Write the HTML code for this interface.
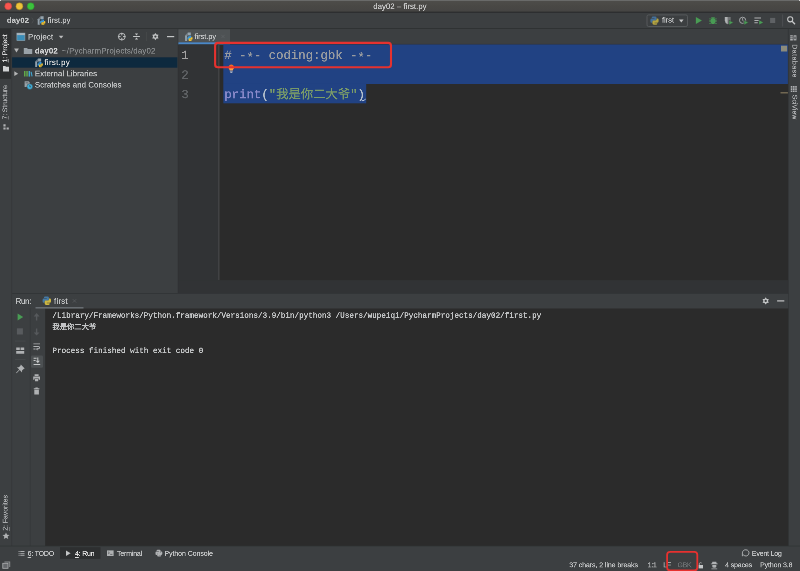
<!DOCTYPE html>
<html lang="zh">
<head>
<meta charset="utf-8">
<title>day02 – first.py</title>
<style>
html,body{margin:0;padding:0;background:#3c3f41;}
body{width:800px;height:571px;overflow:hidden;position:relative;}
#root{position:absolute;left:0;top:0;width:800px;height:571px;overflow:hidden;}
#bg,#icons{position:absolute;left:0;top:0;}
#texts{will-change:transform;position:absolute;left:0;top:0;width:3200px;height:2284px;transform:scale(.25);transform-origin:0 0;font-family:"Liberation Sans","Noto Sans CJK SC",sans-serif;color:#bbbbbb;}
.t{position:absolute;white-space:nowrap;line-height:40px;height:40px;-webkit-text-stroke:0.9px currentColor;}
.m{font-family:"Liberation Mono","Noto Sans CJK SC",monospace;}
.c{-webkit-text-stroke:1.3px currentColor;}
u{text-decoration-thickness:2.6px;text-underline-offset:5px;}
.st{position:relative;top:9px;}
</style>
</head>
<body>
<div id="root">

<svg id="bg" width="800" height="571" viewBox="0 0 800 571">
<defs>
<linearGradient id="tb" x1="0" y1="0" x2="0" y2="1"><stop offset="0" stop-color="#4e4d4a"/><stop offset="0.5" stop-color="#494845"/><stop offset="1" stop-color="#454443"/></linearGradient>
</defs>
<rect x="0" y="0" width="800" height="571" fill="#3c3f41"/>
<!-- title bar -->
<rect x="0" y="0" width="800" height="12" fill="url(#tb)"/>
<rect x="0" y="0" width="800" height="0.9" fill="#6c6e6e"/>
<rect x="0" y="0" width="1" height="1" fill="#d8d8d8"/><rect x="799" y="0" width="1" height="1" fill="#d8d8d8"/>
<rect x="0" y="11.7" width="800" height="1" fill="#27292a"/>
<circle cx="8.2" cy="6.3" r="3.45" fill="#f9564f" stroke="#c4433d" stroke-width="0.5"/>
<circle cx="19.4" cy="6.3" r="3.45" fill="#ecc23a" stroke="#a9841f" stroke-width="0.5"/>
<circle cx="30.7" cy="6.3" r="3.45" fill="#3cc23d" stroke="#2c942d" stroke-width="0.5"/>
<!-- nav bar -->
<rect x="0" y="28.1" width="800" height="0.9" fill="#2e3133"/>
<rect x="647" y="14.9" width="40.5" height="11.6" rx="1.6" fill="none" stroke="#595c5f" stroke-width="0.9"/>
<rect x="782.3" y="14.5" width="0.8" height="12" fill="#505356"/>
<!-- left tool strip -->
<rect x="0" y="29" width="11.4" height="49.8" fill="#2d2f30"/>
<rect x="11.3" y="29" width="0.8" height="517" fill="#35383a"/>
<!-- project panel -->
<rect x="12.1" y="57.3" width="165.5" height="10.4" fill="#0d293e"/>
<rect x="146.3" y="32" width="0.7" height="9" fill="#484b4d"/>
<!-- editor -->
<rect x="177.5" y="29" width="0.9" height="264.4" fill="#35383a"/>
<rect x="178.4" y="29.4" width="51.6" height="13" fill="#4e5254"/>
<rect x="178.4" y="42.3" width="51.6" height="2.3" fill="#4a88c7"/>
<rect x="230" y="43.8" width="558.4" height="0.9" fill="#37393b"/>
<rect x="178.4" y="44.6" width="610" height="248.6" fill="#2b2b2b"/>
<rect x="178.4" y="44.6" width="40.2" height="248.6" fill="#313335"/>
<rect x="218.5" y="44.6" width="0.8" height="235.6" fill="#555758"/>
<rect x="178.4" y="280.1" width="610" height="13" fill="#313335"/>
<rect x="223.3" y="44.5" width="565.2" height="39.5" fill="#214283"/>
<rect x="223.3" y="83.9" width="142.9" height="19.4" fill="#214283"/>
<rect x="781" y="45.7" width="6.2" height="5.8" fill="#8c8b7c"/>
<rect x="780.5" y="92.4" width="7.5" height="0.9" fill="#a08f6c"/>
<!-- right tool strip -->
<rect x="788.4" y="29" width="11.6" height="517" fill="#3c3f41"/>
<rect x="787.9" y="29" width="0.8" height="517" fill="#323537"/>
<!-- run panel -->
<rect x="12.1" y="293" width="776" height="0.9" fill="#323537"/>
<rect x="12.1" y="293.9" width="776" height="14.6" fill="#3c3f41"/>
<rect x="29.8" y="308.5" width="0.8" height="237.5" fill="#35383a"/>
<rect x="45.2" y="308.5" width="743" height="237.5" fill="#2b2b2b"/>
<rect x="35.5" y="307.1" width="48" height="1.4" fill="#6c7277"/>
<rect x="31" y="355.4" width="12" height="12.4" rx="1.3" fill="#4c5052"/>
<rect x="15" y="340.7" width="10.5" height="0.7" fill="#4a4d4f"/>
<rect x="15" y="359" width="10.5" height="0.7" fill="#4a4d4f"/>
<!-- bottom tool bar -->
<rect x="0" y="545.7" width="800" height="0.9" fill="#2f3234"/>
<rect x="0" y="546.6" width="800" height="24.4" fill="#3c3f41"/>
<rect x="60" y="547.2" width="40.5" height="11.6" fill="#2d2f30"/>
</svg>

<div id="texts">
<div class="t" id="title" style="left:1493.2px;top:6px;font-size:31.20px;color:#c6c6c6;letter-spacing:0.10px;">day02 – first.py</div>
<div class="t" id="nav1" style="left:27.6px;top:60px;font-size:30.40px;color:#c0c2c3;font-weight:bold;letter-spacing:0.48px;">day02</div>
<div class="t" id="nav2" style="left:190.0px;top:60px;font-size:30.40px;color:#c0c2c3;letter-spacing:0.30px;">first.py</div>
<div class="t" id="rc" style="left:2648.0px;top:59px;font-size:30.40px;color:#c0c2c3;letter-spacing:-0.20px;">first</div>
<div class="t" id="ph" style="left:112.0px;top:128px;font-size:31.20px;color:#c0c2c3;letter-spacing:0.54px;">Project</div>
<div class="t" id="r1" style="left:139.6px;top:184px;font-size:31.20px;color:#cfd0d1;font-weight:bold;letter-spacing:0.72px;">day02</div>
<div class="t" id="r1b" style="left:248.0px;top:184px;font-size:31.20px;color:#85888a;letter-spacing:0.78px;">~/PycharmProjects/day02</div>
<div class="t" id="r2" style="left:177.6px;top:230px;font-size:31.20px;color:#cfd0d1;letter-spacing:1.35px;">first.py</div>
<div class="t" id="r3" style="left:139.6px;top:275px;font-size:31.20px;color:#c0c2c3;letter-spacing:0.34px;">External Libraries</div>
<div class="t" id="r4" style="left:139.6px;top:320px;font-size:31.20px;color:#c0c2c3;letter-spacing:0.40px;">Scratches and Consoles</div>
<div class="t" id="tabt" style="left:778.0px;top:126px;font-size:29.60px;color:#c0c2c3;letter-spacing:-0.12px;">first.py</div>
<div class="t m" id="ln1" style="left:725.2px;top:203px;font-size:49.32px;color:#a4a3a3;">1</div>
<div class="t m" id="ln2" style="left:725.2px;top:282px;font-size:49.32px;color:#606366;">2</div>
<div class="t m" id="ln3" style="left:725.2px;top:360px;font-size:49.32px;color:#606366;">3</div>
<div class="t m" id="c1" style="left:897.2px;top:203px;font-size:49.32px;color:#9b9da0;"># -<span class="st">*</span>- coding:gbk -<span class="st">*</span>-</div>
<div class="t m" id="c3" style="left:897.2px;top:360px;font-size:49.32px;color:#b4c0cc;letter-spacing:0.03px;"><span style="color:#8b8bcb">print</span>(<span style="color:#7b9c68">"我是你二大爷"</span>)</div>
<div class="t" id="runl" style="left:62.8px;top:1185px;font-size:31.20px;color:#c0c2c3;letter-spacing:-1.20px;">Run:</div>
<div class="t" id="runt" style="left:216.0px;top:1185px;font-size:31.20px;color:#c0c2c3;letter-spacing:0.96px;">first</div>
<div class="t m c" id="o1" style="left:209.6px;top:1243px;font-size:30.48px;color:#c3c5c6;letter-spacing:-0.01px;">/Library/Frameworks/Python.framework/Versions/3.9/bin/python3 /Users/wupeiqi/PycharmProjects/day02/first.py</div>
<div class="t m c" id="o2" style="left:209.6px;top:1290px;font-size:29.20px;color:#c3c5c6;letter-spacing:0.03px;">我是你二大爷</div>
<div class="t m c" id="o4" style="left:209.6px;top:1384px;font-size:30.48px;color:#c3c5c6;">Process finished with exit code 0</div>
<div class="t" id="b1" style="left:110.4px;top:2194px;font-size:28.00px;color:#c0c2c3;letter-spacing:-0.77px;"><u>6</u>: TODO</div>
<div class="t" id="b2" style="left:300.0px;top:2194px;font-size:28.00px;color:#dfdfdf;letter-spacing:-0.83px;"><u>4</u>: Run</div>
<div class="t" id="b3" style="left:468.0px;top:2194px;font-size:28.00px;color:#c0c2c3;letter-spacing:-0.75px;">Terminal</div>
<div class="t" id="b4" style="left:657.6px;top:2194px;font-size:28.00px;color:#c0c2c3;letter-spacing:-0.26px;">Python Console</div>
<div class="t" id="b5" style="left:3007.6px;top:2194px;font-size:28.00px;color:#c0c2c3;letter-spacing:-0.80px;">Event Log</div>
<div class="t" id="s1" style="left:2277.2px;top:2240px;font-size:27.60px;color:#c0c2c3;letter-spacing:-0.14px;">37 chars, 2 line breaks</div>
<div class="t" id="s2" style="left:2591.2px;top:2240px;font-size:27.60px;color:#c0c2c3;letter-spacing:-1.20px;">1:1</div>
<div class="t" id="s3" style="left:2652.8px;top:2240px;font-size:27.60px;color:#c0c2c3;letter-spacing:-1.20px;">LF</div>
<div class="t" id="s4" style="left:2710.0px;top:2240px;font-size:27.60px;color:#6c6f71;letter-spacing:-1.07px;">GBK</div>
<div class="t" id="s5" style="left:2900.4px;top:2240px;font-size:27.60px;color:#c0c2c3;letter-spacing:-0.35px;">4 spaces</div>
<div class="t" id="s6" style="left:3040.4px;top:2240px;font-size:27.60px;color:#c0c2c3;letter-spacing:-0.24px;">Python 3.8</div>
<div class="t" id="l1" style="left:0.4px;top:250.4px;font-size:27.60px;color:#d6d6d6;transform-origin:0 0;transform:rotate(-90deg);letter-spacing:-0.50px;"><u>1</u>: Project</div>
<div class="t" id="l2" style="left:0.4px;top:477.6px;font-size:27.60px;color:#a9abad;transform-origin:0 0;transform:rotate(-90deg);letter-spacing:-0.45px;"><u>7</u>: Structure</div>
<div class="t" id="l3" style="left:0.8px;top:2122.8px;font-size:27.60px;color:#a9abad;transform-origin:0 0;transform:rotate(-90deg);letter-spacing:-0.13px;"><u>2</u>: Favorites</div>
<div class="t" id="r1t" style="left:3198.8px;top:177.2px;font-size:27.60px;color:#a9abad;transform-origin:0 0;transform:rotate(90deg);letter-spacing:2.10px;">Database</div>
<div class="t" id="r2t" style="left:3198.8px;top:378.8px;font-size:27.60px;color:#a9abad;transform-origin:0 0;transform:rotate(90deg);letter-spacing:0.11px;">SciView</div>
</div>

<svg id="icons" width="800" height="571" viewBox="0 0 800 571">
<path d="M31.8,17.6 l1.6,2.9 l-1.6,2.9" stroke="#505355" stroke-width="0.7" fill="none"/>
<g transform="translate(37.6,16.2) scale(1.0,1.0)"><path d="M0.1,3 L3,0.1 H6 V8.6 H0.1 Z" fill="#95a3ad"/><path d="M0.1,3 L3,0.1 V3 Z" fill="#3c3f41" opacity="0.45"/><rect x="2" y="2.9" width="6" height="6.2" rx="1.4" fill="#3c3f41"/><g transform="translate(5.1,6) scale(0.66)"><path d="M-1.5,-4 H0.7 Q2,-4 2,-2.7 V-1 Q2,0.1 0.9,0.1 H-1 Q-2.1,0.1 -2.1,1.2 V2 H-2.9 Q-4,2 -4,0.8 V-0.7 Q-4,-2 -2.8,-2 H0 V-2.5 H-2.7 V-2.8 Q-2.7,-4 -1.5,-4 Z" fill="#3d9bdc"/><path d="M-1.5,-4 H0.7 Q2,-4 2,-2.7 V-1 Q2,0.1 0.9,0.1 H-1 Q-2.1,0.1 -2.1,1.2 V2 H-2.9 Q-4,2 -4,0.8 V-0.7 Q-4,-2 -2.8,-2 H0 V-2.5 H-2.7 V-2.8 Q-2.7,-4 -1.5,-4 Z" fill="#f1c232" transform="rotate(180)"/></g></g>
<g transform="translate(654.5,20.6) scale(1.025)" opacity="1.0"><path d="M-1.5,-4 H0.7 Q2,-4 2,-2.7 V-1 Q2,0.1 0.9,0.1 H-1 Q-2.1,0.1 -2.1,1.2 V2 H-2.9 Q-4,2 -4,0.8 V-0.7 Q-4,-2 -2.8,-2 H0 V-2.5 H-2.7 V-2.8 Q-2.7,-4 -1.5,-4 Z" fill="#44709a"/><path d="M-1.5,-4 H0.7 Q2,-4 2,-2.7 V-1 Q2,0.1 0.9,0.1 H-1 Q-2.1,0.1 -2.1,1.2 V2 H-2.9 Q-4,2 -4,0.8 V-0.7 Q-4,-2 -2.8,-2 H0 V-2.5 H-2.7 V-2.8 Q-2.7,-4 -1.5,-4 Z" fill="#b5a540" transform="rotate(180)"/></g>
<path d="M679,19.5 h4.6 l-2.3,2.9 z" fill="#c3c4c5"/>
<path d="M695.9,17 l6,3.5 l-6,3.5 z" fill="#499c54"/>
<g fill="#499c54"><ellipse cx="713" cy="21" rx="2.5" ry="3.1"/><path d="M711.2,17.3 h3.6 v1 h-3.6 z"/><path d="M709.3,18.4 h1.5 v0.9 h-1.5 z M715.2,18.4 h1.5 v0.9 h-1.5 z M709.1,20.6 h7.8 v0.9 h-7.8 z M709.3,22.9 h1.5 v0.9 h-1.5 z M715.2,22.9 h1.5 v0.9 h-1.5 z"/></g>
<path d="M724.8,17 h5.6 v3.6 q0,2.4 -2.8,3.6 q-2.8,-1.2 -2.8,-3.6 z" fill="#afb1b3"/><path d="M727.6,17 h2.8 v3.6 q0,2.4 -2.8,3.6 z" fill="#3c3f41" opacity="0.55"/><path d="M729,20.1 l4.5,2.5 l-4.5,2.5 z" fill="#499c54" stroke="#3c3f41" stroke-width="0.6"/>
<circle cx="742.6" cy="20.3" r="3.1" fill="none" stroke="#afb1b3" stroke-width="0.9"/><path d="M742.6,18 v2.4 l1.4,1" stroke="#afb1b3" stroke-width="0.8" fill="none"/><path d="M744,20.1 l4.5,2.5 l-4.5,2.5 z" fill="#499c54" stroke="#3c3f41" stroke-width="0.6"/>
<path d="M754.4,17.5 h6.6 v1 h-6.6 z M754.4,19.9 h4.2 v1 h-4.2 z M754.4,22.3 h3.4 v1 h-3.4 z" fill="#afb1b3"/><path d="M759.2,20.3 l3.9,2.1 l-3.9,2.1 z" fill="#499c54"/>
<rect x="770.1" y="17.9" width="5.1" height="5.1" fill="#5f6265"/>
<circle cx="790.2" cy="19.3" r="2.55" fill="none" stroke="#c9cacb" stroke-width="1.05"/><path d="M792.1,21.3 l2.9,3" stroke="#c9cacb" stroke-width="1.3"/>
<path d="M3,66 h2.3 l0.7,0.8 h3 v4.6 h-6 z" fill="#d0d1d2"/>
<path d="M3.4,124.2 h2.2 v2.2 h-2.2 z M3.4,127.4 h2.2 v2.2 h-2.2 z M6.6,127.4 h2.2 v2.2 h-2.2 z" fill="#afb1b3"/>
<path d="M6,532.4 l1.05,2.3 l2.5,0.25 l-1.9,1.65 l0.55,2.45 l-2.2,-1.3 l-2.2,1.3 l0.55,-2.45 l-1.9,-1.65 l2.5,-0.25 z" fill="#afb1b3"/>
<rect x="16.9" y="33.1" width="8" height="7.6" fill="#3a8db8" stroke="#93a3ad" stroke-width="0.6"/><rect x="16.9" y="33.1" width="8" height="2" fill="#a9b4bc"/>
<path d="M58.8,35.8 h4.6 l-2.3,2.7 z" fill="#bcbdbe"/>
<circle cx="121.8" cy="36.6" r="3.4" fill="none" stroke="#c3c5c6" stroke-width="0.9"/><path d="M121.8,33 v2.4 M121.8,37.8 v2.4 M118.2,36.6 h2.4 M123,36.6 h2.4" stroke="#c3c5c6" stroke-width="1"/>
<path d="M133.1,36.1 h6.8 v0.9 h-6.8 z M134.9,33.6 h3.2 l-1.6,1.9 z M134.9,39.5 h3.2 l-1.6,-1.9 z" fill="#c3c5c6"/>
<path d="M155.40,33.00 L156.55,34.61 L158.52,34.80 L157.70,36.60 L158.52,38.40 L156.55,38.59 L155.40,40.20 L154.25,38.59 L152.28,38.40 L153.10,36.60 L152.28,34.80 L154.25,34.61 z" fill="#c3c5c6"/><circle cx="155.4" cy="36.6" r="1.15" fill="#3c3f41"/>
<rect x="167" y="36" width="7.2" height="1.2" fill="#c3c5c6"/>
<path d="M14.1,48.6 h4.8 l-2.4,3.8 z" fill="#b4b5b6"/>
<path d="M23.8,47.9 h3.2 l0.9,1.1 h4.3 v4.9 h-8.4 z" fill="#9aa2a8"/>
<g transform="translate(35.1,58.5) scale(1.0,1.0)"><path d="M0.1,3 L3,0.1 H6 V8.6 H0.1 Z" fill="#95a3ad"/><path d="M0.1,3 L3,0.1 V3 Z" fill="#0d293e" opacity="0.45"/><rect x="2" y="2.9" width="6" height="6.2" rx="1.4" fill="#0d293e"/><g transform="translate(5.1,6) scale(0.66)"><path d="M-1.5,-4 H0.7 Q2,-4 2,-2.7 V-1 Q2,0.1 0.9,0.1 H-1 Q-2.1,0.1 -2.1,1.2 V2 H-2.9 Q-4,2 -4,0.8 V-0.7 Q-4,-2 -2.8,-2 H0 V-2.5 H-2.7 V-2.8 Q-2.7,-4 -1.5,-4 Z" fill="#3d9bdc"/><path d="M-1.5,-4 H0.7 Q2,-4 2,-2.7 V-1 Q2,0.1 0.9,0.1 H-1 Q-2.1,0.1 -2.1,1.2 V2 H-2.9 Q-4,2 -4,0.8 V-0.7 Q-4,-2 -2.8,-2 H0 V-2.5 H-2.7 V-2.8 Q-2.7,-4 -1.5,-4 Z" fill="#f1c232" transform="rotate(180)"/></g></g>
<path d="M14.3,71.3 l3.9,2.4 l-3.9,2.4 z" fill="#b4b5b6"/>
<path d="M24,71 h1.5 v5.6 h-1.5 z M26.3,71 h1.5 v5.6 h-1.5 z" fill="#62a84a"/><path d="M28.6,71 h1.5 v5.6 h-1.5 z" fill="#43a5cf"/><path d="M30.6,72 l1.1,-0.3 l0.9,4.6 l-1.1,0.3 z" fill="#43a5cf"/>
<path d="M24.6,81.2 h4 l1.2,1.2 v4.6 h-5.2 z" fill="#9aa2a8"/><path d="M25.6,82.6 h2.6 v0.6 h-2.6 z" fill="#3c3f41"/><circle cx="29.8" cy="86.6" r="2.9" fill="#3fb1dc" stroke="#3c3f41" stroke-width="0.5"/><path d="M29.8,85 v1.8 h1.3" stroke="#3c3f41" stroke-width="0.7" fill="none"/>
<g transform="translate(185,32.4) scale(0.9736842105263159,1.0)"><path d="M0.1,3 L3,0.1 H6 V8.6 H0.1 Z" fill="#95a3ad"/><path d="M0.1,3 L3,0.1 V3 Z" fill="#4e5254" opacity="0.45"/><rect x="2" y="2.9" width="6" height="6.2" rx="1.4" fill="#4e5254"/><g transform="translate(5.1,6) scale(0.66)"><path d="M-1.5,-4 H0.7 Q2,-4 2,-2.7 V-1 Q2,0.1 0.9,0.1 H-1 Q-2.1,0.1 -2.1,1.2 V2 H-2.9 Q-4,2 -4,0.8 V-0.7 Q-4,-2 -2.8,-2 H0 V-2.5 H-2.7 V-2.8 Q-2.7,-4 -1.5,-4 Z" fill="#3d9bdc"/><path d="M-1.5,-4 H0.7 Q2,-4 2,-2.7 V-1 Q2,0.1 0.9,0.1 H-1 Q-2.1,0.1 -2.1,1.2 V2 H-2.9 Q-4,2 -4,0.8 V-0.7 Q-4,-2 -2.8,-2 H0 V-2.5 H-2.7 V-2.8 Q-2.7,-4 -1.5,-4 Z" fill="#f1c232" transform="rotate(180)"/></g></g>
<path d="M221.3,34.8 l3.4,3.4 M224.7,34.8 l-3.4,3.4" stroke="#606366" stroke-width="0.7"/>
<path d="M231.3,64.5 a2.85,2.85 0 0 1 1.7,5.1 v0.7 h-3.4 v-0.7 a2.85,2.85 0 0 1 1.7,-5.1 z" fill="#f26a25"/><path d="M228.9,68.3 h4.8 q-0.3,0.9 -0.7,1.3 v0.7 h-3.4 v-0.7 q-0.4,-0.4 -0.7,-1.3 z" fill="#f6a544"/><path d="M229.9,70.7 h2.8 v0.9 h-2.8 z M230.3,71.9 h2 v0.8 h-2 z" fill="#d4d4d4"/>
<path d="M361.6,100.2 q1.5,1.2 2.6,-0.1 l1.5,-1" stroke="#dfe4ee" stroke-width="0.8" fill="none"/>
<g transform="translate(-1,0.1)"><g fill="#afb1b3"><path d="M791.2,35.2 h2.6 v1.3 h-2.6 z M791.2,37.1 h2.6 v1.3 h-2.6 z M791.2,39 h2.6 v1.3 h-2.6 z"/><path d="M794.6,35.2 h2.8 v5.1 h-2.8 z"/></g><rect x="795.4" y="36.4" width="1.2" height="2.7" fill="#3c3f41"/></g>
<g fill="#afb1b3" transform="translate(-0.6,0.5)"><path d="M791.4,85.6 h1.6 v1.6 h-1.6 z M793.6,85.6 h1.6 v1.6 h-1.6 z M795.8,85.6 h1.6 v1.6 h-1.6 z M791.4,87.8 h1.6 v1.6 h-1.6 z M793.6,87.8 h1.6 v1.6 h-1.6 z M795.8,87.8 h1.6 v1.6 h-1.6 z M791.4,90 h1.6 v1.6 h-1.6 z M793.6,90 h1.6 v1.6 h-1.6 z M795.8,90 h1.6 v1.6 h-1.6 z"/></g>
<g transform="translate(46.8,300.7) scale(1.05)" opacity="1.0"><path d="M-1.5,-4 H0.7 Q2,-4 2,-2.7 V-1 Q2,0.1 0.9,0.1 H-1 Q-2.1,0.1 -2.1,1.2 V2 H-2.9 Q-4,2 -4,0.8 V-0.7 Q-4,-2 -2.8,-2 H0 V-2.5 H-2.7 V-2.8 Q-2.7,-4 -1.5,-4 Z" fill="#457aa6"/><path d="M-1.5,-4 H0.7 Q2,-4 2,-2.7 V-1 Q2,0.1 0.9,0.1 H-1 Q-2.1,0.1 -2.1,1.2 V2 H-2.9 Q-4,2 -4,0.8 V-0.7 Q-4,-2 -2.8,-2 H0 V-2.5 H-2.7 V-2.8 Q-2.7,-4 -1.5,-4 Z" fill="#cdb741" transform="rotate(180)"/></g>
<path d="M72.8,299.2 l3.4,3.4 M76.2,299.2 l-3.4,3.4" stroke="#5b5e61" stroke-width="0.7"/>
<path d="M765.70,297.30 L766.85,298.91 L768.82,299.10 L768.00,300.90 L768.82,302.70 L766.85,302.89 L765.70,304.50 L764.55,302.89 L762.58,302.70 L763.40,300.90 L762.58,299.10 L764.55,298.91 z" fill="#c3c5c6"/><circle cx="765.7" cy="300.9" r="1.15" fill="#3c3f41"/>
<rect x="777.1" y="300.3" width="7.2" height="1.2" fill="#c3c5c6"/>
<path d="M17.6,313.6 l5.6,3.4 l-5.6,3.4 z" fill="#499c54"/>
<rect x="16.9" y="328.3" width="6" height="6.2" fill="#585b5e"/>
<path d="M16.2,347.6 h3.6 v2.4 h-3.6 z M20.6,347.6 h3.6 v2.4 h-3.6 z M16.2,351 h8 v2.7 h-8 z" fill="#afb1b3"/>
<path transform="translate(20.2,369) scale(1.22) translate(-20.2,-367.6)" d="M20.7,364 l3.2,3.2 l-0.9,0.3 l-1.3,1.3 l0,1.6 l-1.9,-1.9 l-2.6,2.6 l-0.4,-0.4 l2.6,-2.6 l-1.9,-1.9 l1.6,0 l1.3,-1.3 z" fill="#afb1b3"/>
<path d="M36.6,313 l3,3.4 h-2.3 v4.2 h-1.4 v-4.2 h-2.2 z" fill="#56595c"/>
<path d="M36.6,335.6 l2.9,-3.2 h-2.2 v-4 h-1.4 v4 h-2.2 z" fill="#56595c"/>
<path d="M33.4,343.4 h6.6 v0.9 h-6.6 z M33.4,346 h5 q1.7,0 1.7,1.6 q0,1.6 -1.7,1.6 h-1.2 v-0.9 h1.2 q0.8,0 0.8,-0.7 q0,-0.7 -0.8,-0.7 h-5 z M33.4,348.6 h2.2 v0.9 h-2.2 z" fill="#afb1b3"/><path d="M37.6,347.7 v2.8 l-1.7,-1.4 z" fill="#afb1b3"/>
<path d="M33.6,357.8 h3 v0.9 h-3 z M33.6,360 h2 v0.9 h-2 z M33.6,364 h6.6 v1 h-6.6 z M38.3,357.6 v3.2 h1.5 l-2,2.4 l-2,-2.4 h1.5 v-3.2 z" fill="#c7c9ca"/>
<path transform="translate(0,2.6)" d="M34.6,371.6 h4 v1.8 h-4 z M33.2,373.8 h6.8 v3.4 h-1.2 v-1.4 h-4.4 v1.4 h-1.2 z M35,376.4 h3.2 v2.2 h-3.2 z" fill="#afb1b3"/>
<path transform="translate(0,1.2)" d="M35.4,386.4 h2.4 v0.7 h1.6 v0.9 h-5.6 v-0.9 h1.6 z M34.3,388.6 h4.6 v4.6 h-4.6 z" fill="#afb1b3"/>
<path d="M18.6,551 h1 v0.9 h-1 z M20.3,551 h4.2 v0.9 h-4.2 z M18.6,552.9 h1 v0.9 h-1 z M20.3,552.9 h4.2 v0.9 h-4.2 z M18.6,554.8 h1 v0.9 h-1 z M20.3,554.8 h4.2 v0.9 h-4.2 z" fill="#afb1b3"/>
<path d="M66,550.6 l4.6,2.7 l-4.6,2.7 z" fill="#c3c5c6"/>
<rect x="107" y="550.4" width="6.6" height="5.6" fill="#afb1b3"/><path d="M108.1,551.8 l1.3,1.1 l-1.3,1.1" stroke="#3c3f41" stroke-width="0.6" fill="none"/><path d="M110.2,554.4 h2.2" stroke="#3c3f41" stroke-width="0.6"/>
<g transform="translate(158.9,553.2) scale(0.85)" opacity="1.0"><path d="M-1.5,-4 H0.7 Q2,-4 2,-2.7 V-1 Q2,0.1 0.9,0.1 H-1 Q-2.1,0.1 -2.1,1.2 V2 H-2.9 Q-4,2 -4,0.8 V-0.7 Q-4,-2 -2.8,-2 H0 V-2.5 H-2.7 V-2.8 Q-2.7,-4 -1.5,-4 Z" fill="#afb1b3"/><path d="M-1.5,-4 H0.7 Q2,-4 2,-2.7 V-1 Q2,0.1 0.9,0.1 H-1 Q-2.1,0.1 -2.1,1.2 V2 H-2.9 Q-4,2 -4,0.8 V-0.7 Q-4,-2 -2.8,-2 H0 V-2.5 H-2.7 V-2.8 Q-2.7,-4 -1.5,-4 Z" fill="#afb1b3" transform="rotate(180)"/></g>
<path d="M745.9,549.8 a3.1,3.1 0 1 1 -2.3,5.2 l-1.2,0.9 v-3 a3.1,3.1 0 0 1 3.5,-3.1 z" fill="none" stroke="#c3c5c6" stroke-width="0.8"/>
<path d="M4.4,561.6 h5.8 v5.4 h-1 v-4.4 h-4.8 z" fill="#8c8f91"/><rect x="2.8" y="563.3" width="5.2" height="5" fill="#65686b" stroke="#afb1b3" stroke-width="0.8"/>
<path d="M698.6,565 h4.4 v3.4 h-4.4 z" fill="#c3c5c6"/><path d="M699.3,565 v-1.2 a1.3,1.3 0 0 1 2.4,-0.6" stroke="#c3c5c6" stroke-width="0.7" fill="none"/>
<path d="M712.4,561.8 h3.8 l0.5,1.7 h1 v0.8 h-6.8 v-0.8 h1 z M712.3,564.9 h4 v1.8 q0,1 -2,1 q-2,0 -2,-1 z M711.4,568.4 h5.8 v0.8 h-5.8 z" fill="#afb1b3"/>
<rect x="215.1" y="42.9" width="175.9" height="24.3" rx="2.8" fill="none" stroke="#e5322f" stroke-width="2.1"/>
<rect x="667.1" y="551.8" width="30.2" height="18.6" rx="3" fill="none" stroke="#e6312f" stroke-width="1.8"/>
</svg>

</div>
</body>
</html>
